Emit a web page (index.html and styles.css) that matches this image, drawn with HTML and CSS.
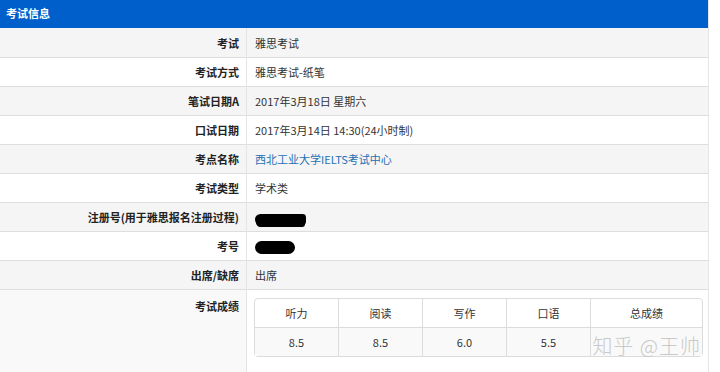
FILE: index.html
```html
<!DOCTYPE html>
<html lang="zh">
<head>
<meta charset="utf-8">
<link rel="stylesheet" href="styles.css">
</head>
<body>
<div class="panel">
  <div class="panel-head">考试信息</div>
  <table class="info">
    <tr class="row odd"><th class="lbl">考试</th><td class="val">雅思考试</td></tr>
    <tr class="row"><th class="lbl">考试方式</th><td class="val">雅思考试-纸笔</td></tr>
    <tr class="row odd"><th class="lbl">笔试日期A</th><td class="val">2017年3月18日 星期六</td></tr>
    <tr class="row"><th class="lbl">口试日期</th><td class="val">2017年3月14日 14:30(24小时制)</td></tr>
    <tr class="row odd"><th class="lbl">考点名称</th><td class="val"><a class="link">西北工业大学IELTS考试中心</a></td></tr>
    <tr class="row"><th class="lbl">考试类型</th><td class="val">学术类</td></tr>
    <tr class="row odd"><th class="lbl">注册号(用于雅思报名注册过程)</th><td class="val"><span class="blob blob-a"></span></td></tr>
    <tr class="row"><th class="lbl">考号</th><td class="val"><span class="blob blob-b"></span></td></tr>
    <tr class="row odd"><th class="lbl">出席/缺席</th><td class="val">出席</td></tr>
    <tr class="row last"><th class="lbl">考试成绩</th><td class="val">
      <div class="scores-wrap">
        <table class="scores">
          <tr class="s-head"><td class="sc c1">听力</td><td class="sc c1">阅读</td><td class="sc c1">写作</td><td class="sc c1">口语</td><td class="sc c5">总成绩</td></tr>
          <tr class="s-body"><td class="sc">8.5</td><td class="sc">8.5</td><td class="sc">6.0</td><td class="sc">5.5</td><td class="sc"></td></tr>
        </table>
        <div class="watermark">知乎 @王帅</div>
      </div>
    </td></tr>
  </table>
</div>
</body>
</html>
```
FILE: styles.css
```css
html, body {
  margin: 0;
  padding: 0;
  background: #ffffff;
}
body {
  font-family: "Noto Sans CJK SC", "Noto Sans", sans-serif;
  font-size: 11px;
  color: #333;
}
.panel {
  width: 708px;
  border-right: 1px solid #e6e6e6;
  height: 372px;
  overflow: hidden;
}
.panel-head {
  height: 28px;
  line-height: 27px;
  background: #015fcb;
  color: #fff;
  font-weight: bold;
  padding-left: 6px;
  font-size: 11px;
}
.info {
  width: 708px;
  border-collapse: collapse;
  table-layout: fixed;
}
.lbl {
  width: 239px;
  text-align: right;
  font-weight: bold;
  padding: 0 7px 0 0;
  height: 28px;
  border-right: 1px solid #e4e4e4;
  vertical-align: middle;
  color: #222;
}
.val {
  padding: 0 0 0 8px;
  height: 28px;
  vertical-align: middle;
  color: #333;
}
.row {
  border-top: 1px solid #dedede;
}
.row:first-child {
  border-top: none;
}
.row:first-child .lbl,
.row:first-child .val {
  height: 29px;
}
.row.odd {
  background: #f5f5f5;
}
.row.last .lbl {
  vertical-align: top;
  padding-top: 8px;
  height: 80px;
  background: #f9f9f9;
}
.row.last .val {
  vertical-align: top;
  padding-top: 8px;
  padding-left: 7px;
}
.link {
  color: #2470b3;
  text-decoration: none;
}
.blob {
  display: inline-block;
  background: #000;
  vertical-align: middle;
}
.blob-a {
  width: 51px;
  height: 11px;
  border-radius: 8px 5px 5px 8px;
  margin-top: 2px;
  box-shadow: 0 3px 0 -1px #000;
}
.blob-b {
  width: 40px;
  height: 13px;
  border-radius: 8px;
}
.scores-wrap {
  position: relative;
  width: 449px;
}
.scores {
  width: 449px;
  border-collapse: separate;
  border-spacing: 0;
  border: 1px solid #dcdcdc;
  border-radius: 4px;
  table-layout: fixed;
}
.sc {
  text-align: center;
  height: 28px;
  padding: 0;
  border-left: 1px solid #dcdcdc;
  vertical-align: middle;
  font-size: 11px;
}
.sc:first-child {
  border-left: none;
}
.c1 {
  width: 83px;
}
.s-body .sc {
  border-top: 1px solid #dcdcdc;
  background: #f9f9f9;
}
.watermark {
  position: absolute;
  right: 2px;
  top: 33px;
  font-size: 20px;
  color: #c9c9c9;
  letter-spacing: 1px;
  font-weight: 300;
  white-space: nowrap;
}
```
